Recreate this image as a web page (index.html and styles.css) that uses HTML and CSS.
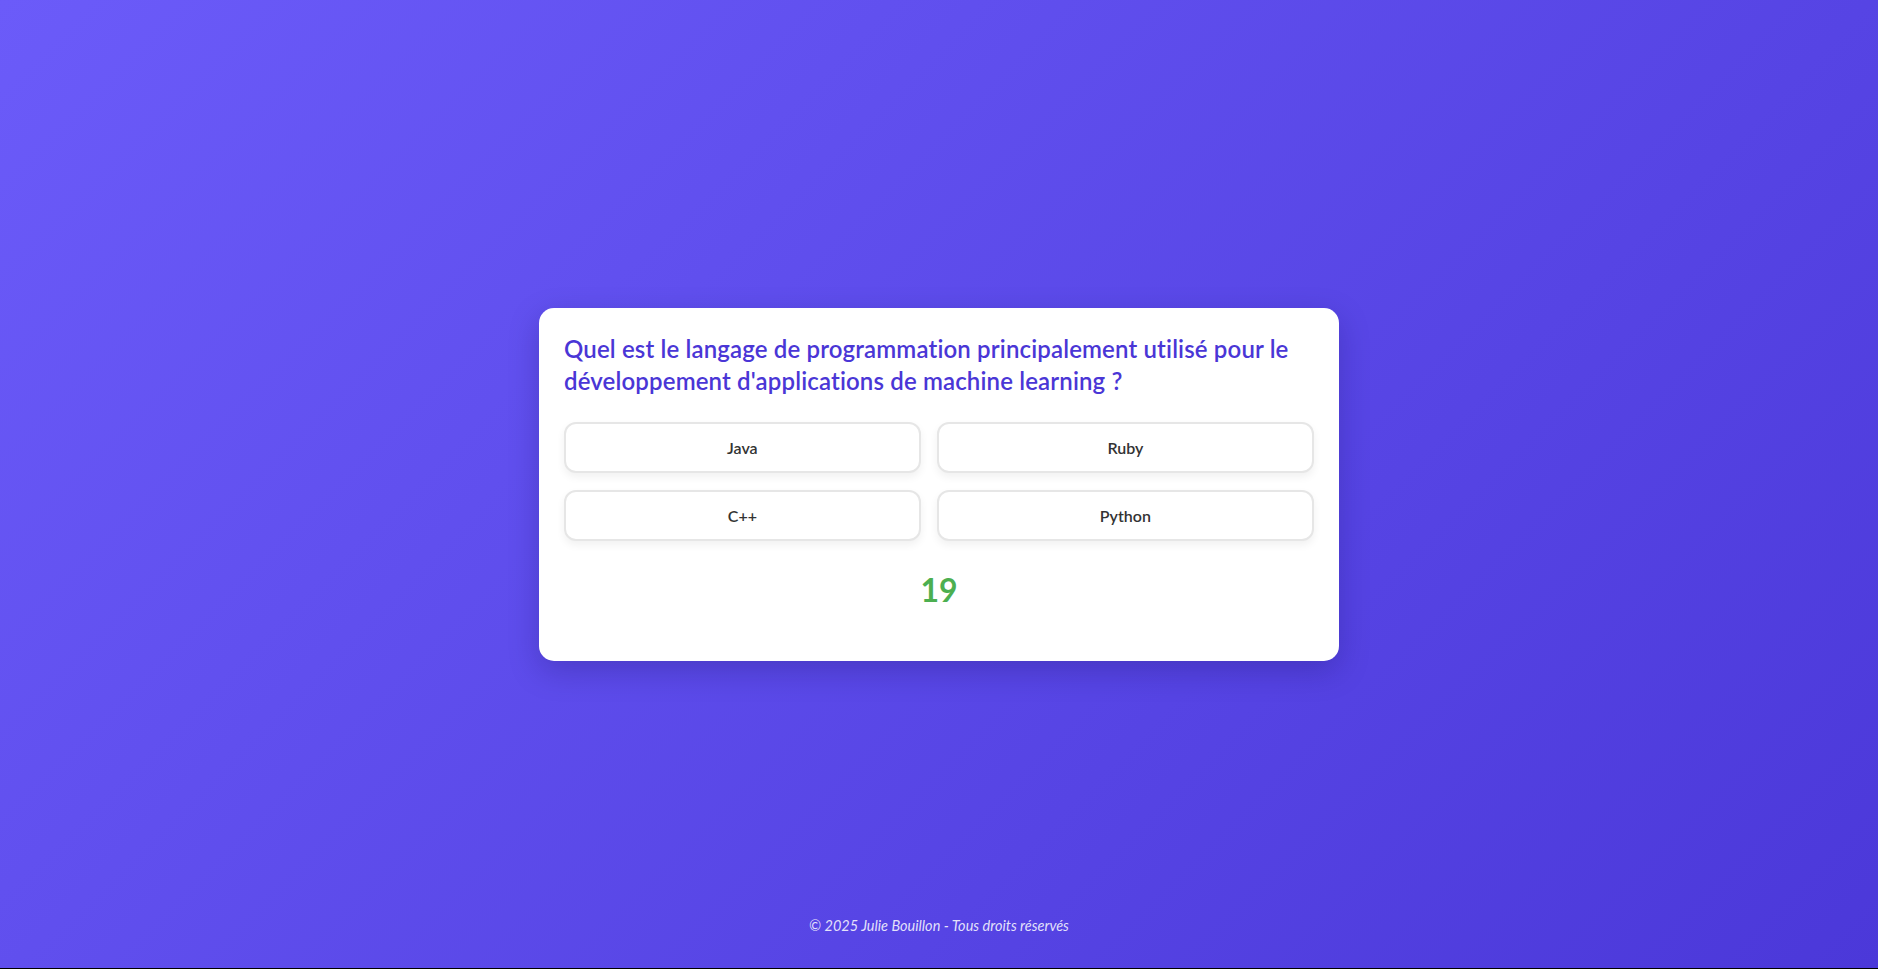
FILE: index.html
```html
<!DOCTYPE html>
<html lang="fr">
<head>
<meta charset="utf-8">
<title>Quiz</title>
<link rel="stylesheet" href="styles.css">
</head>
<body>
<div class="page">
  <main class="quiz-card">
    <h2 class="question">Quel est le langage de programmation principalement utilisé pour le développement d'applications de machine learning ?</h2>
    <div class="answers">
      <button class="answer">Java</button>
      <button class="answer">Ruby</button>
      <button class="answer">C++</button>
      <button class="answer">Python</button>
    </div>
    <div class="timer">19</div>
  </main>
  <footer class="footer">© 2025 Julie Bouillon - Tous droits réservés</footer>
</div>
</body>
</html>
```
FILE: styles.css
```css
* { box-sizing: border-box; }
html, body { margin: 0; padding: 0; }
body {
  font-family: Lato, "Open Sans", sans-serif;
  background: linear-gradient(135deg, #6b5bf9 0%, #4b38d9 100%);
  height: 100vh;
  border-bottom: 1px solid #000;
  overflow: hidden;
}
.page {
  height: 100%;
  display: grid;
  grid-template-rows: 1fr auto 1fr;
  justify-items: center;
}
.quiz-card {
  grid-row: 2;
  width: 800px;
  background: #fff;
  border-radius: 15px;
  padding: 25px;
  box-shadow: 0 10px 30px rgba(20, 10, 90, 0.25);
}
.question {
  margin: 0 0 25px;
  font-size: 24px;
  line-height: 32px;
  font-weight: 600;
  color: #4a36d6;
  letter-spacing: 0.15px;
}
.answers {
  display: grid;
  grid-template-columns: auto auto;
  gap: 17px 16px;
}
.answer {
  font-family: inherit;
  font-size: 16px;
  line-height: 19px;
  font-weight: 600;
  color: #333;
  background: #fff;
  border: 2px solid #e6e6e6;
  border-radius: 12px;
  padding: 14px 20px;
  box-shadow: 0 4px 8px rgba(0, 0, 0, 0.06);
  cursor: pointer;
}
.timer {
  margin: 28px 0 25px;
  text-align: center;
  font-size: 32px;
  line-height: 42px;
  font-weight: 700;
  color: #4caf50;
}
.footer {
  grid-row: 3;
  align-self: end;
  margin-bottom: 33px;
  font-size: 14.5px;
  line-height: 19px;
  font-style: italic;
  color: rgba(255, 255, 255, 0.85);
}
```
